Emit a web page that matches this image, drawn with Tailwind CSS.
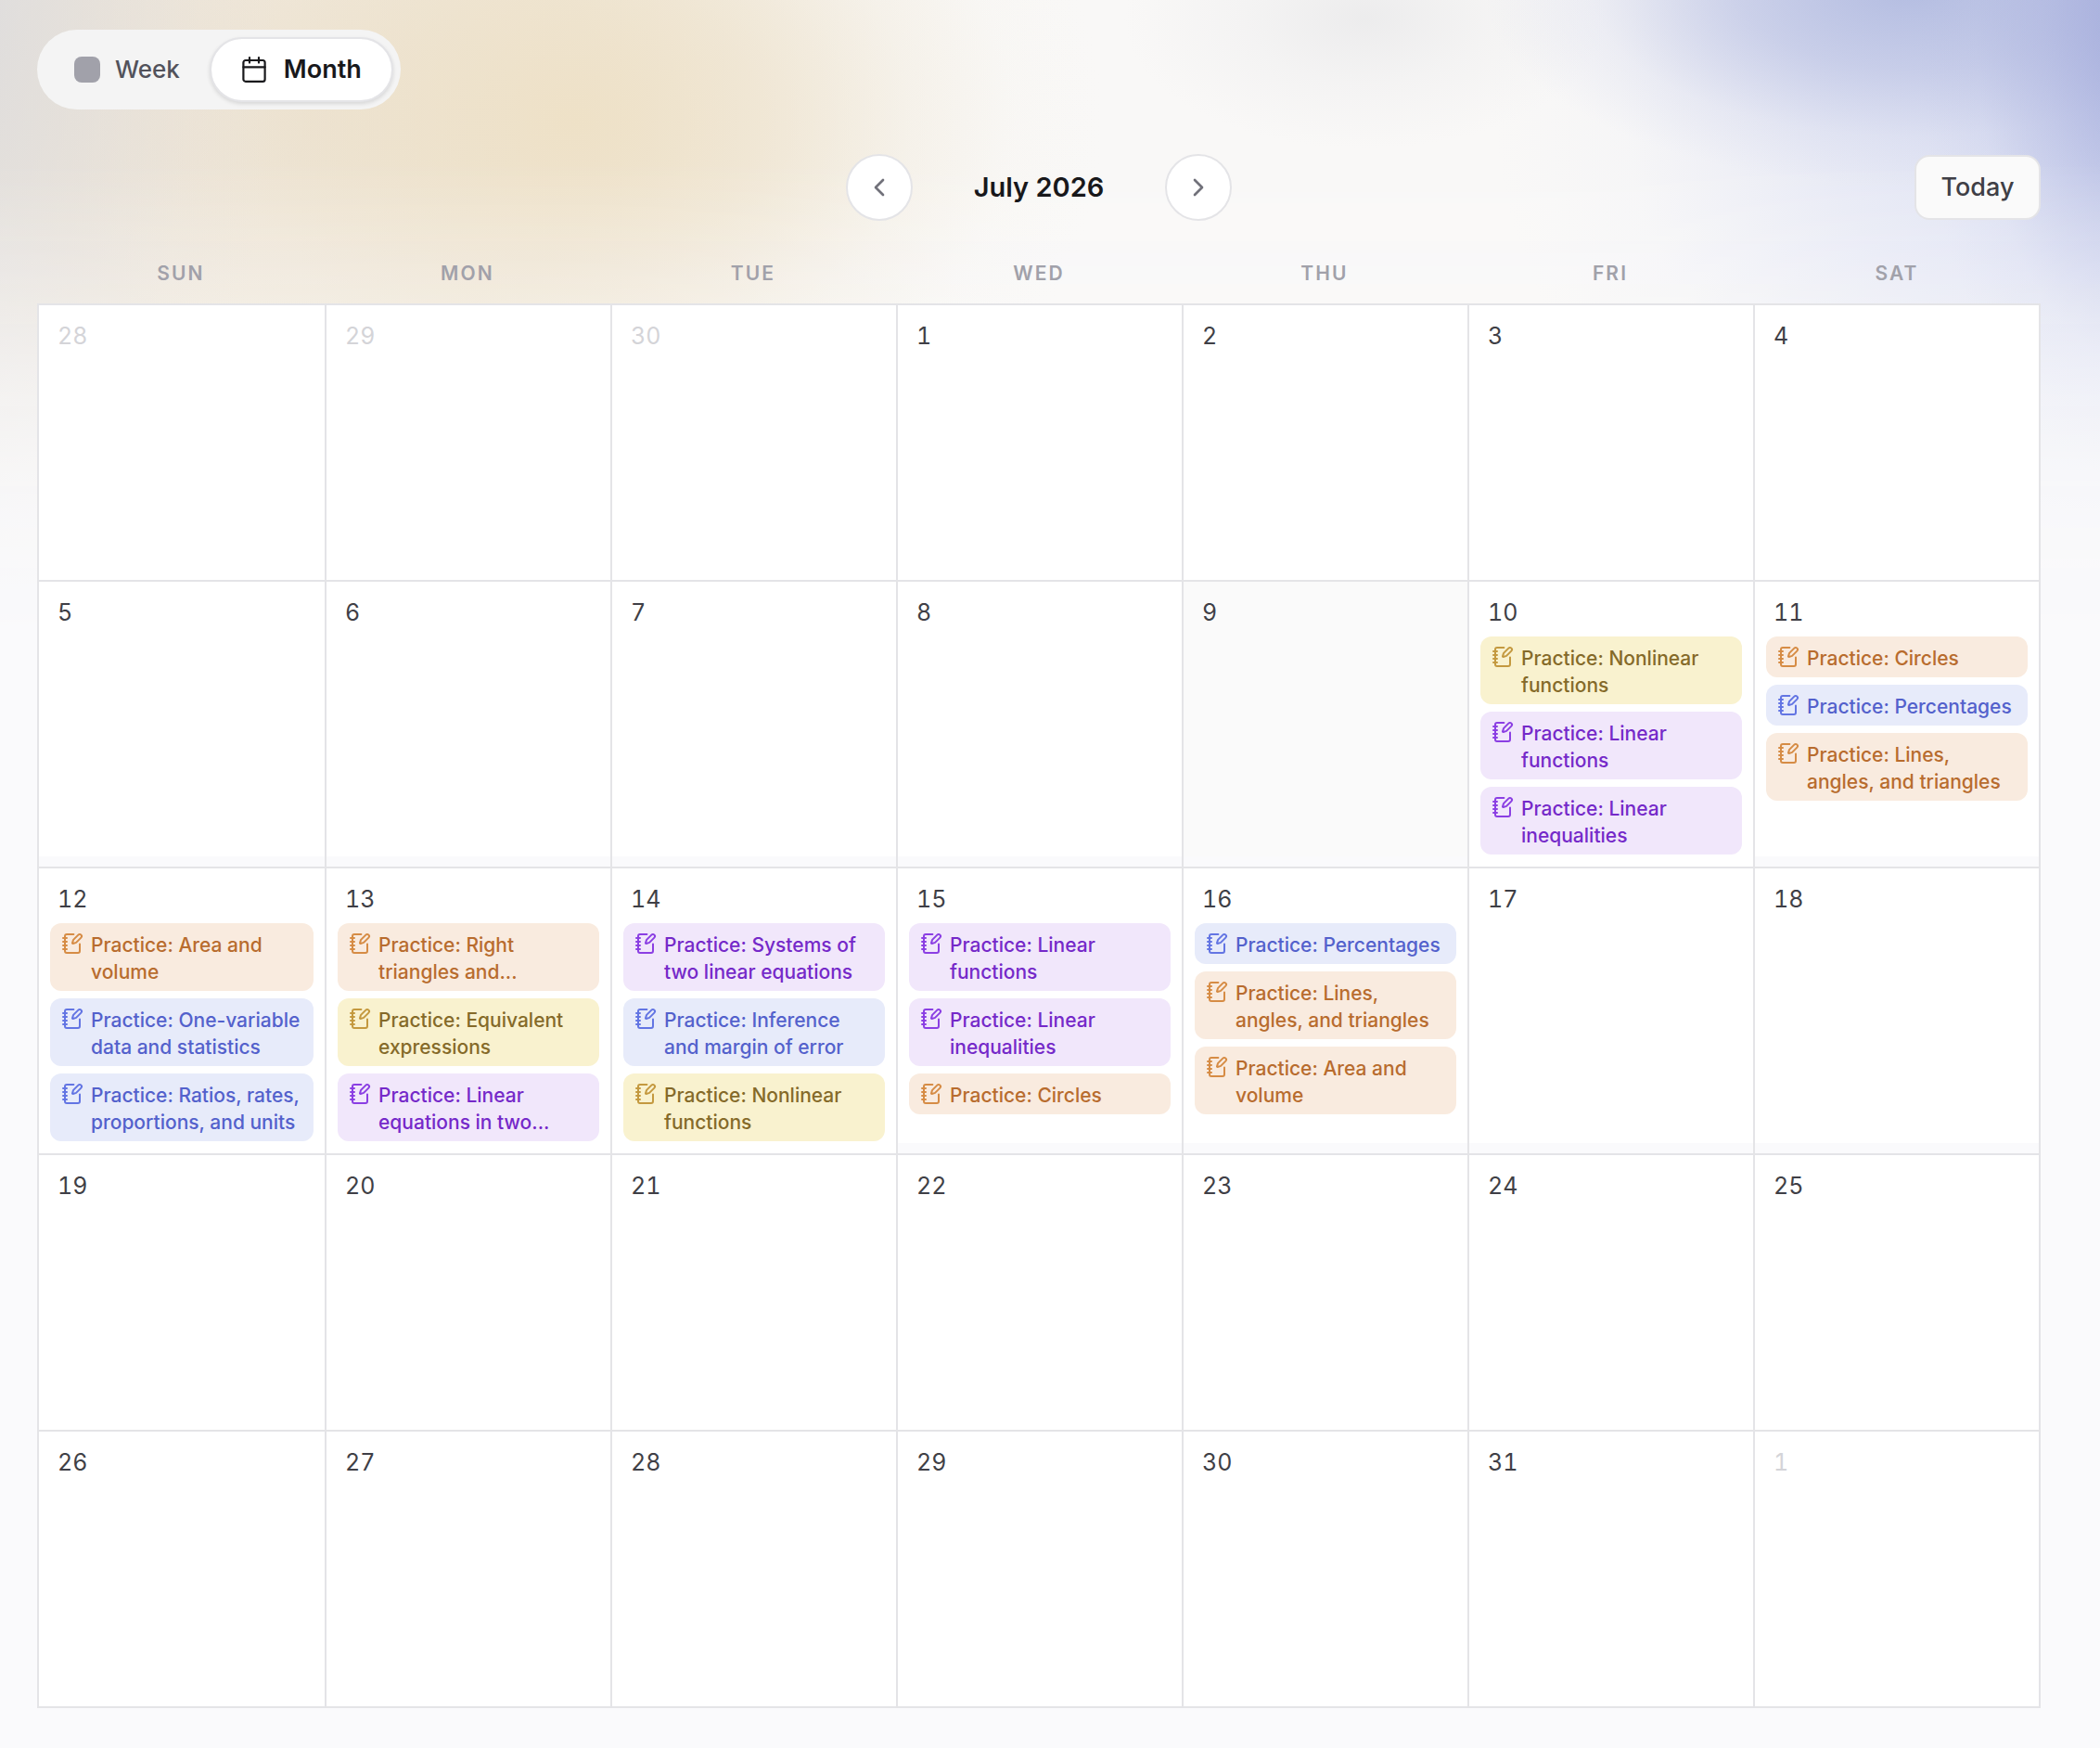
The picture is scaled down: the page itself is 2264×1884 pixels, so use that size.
<!DOCTYPE html>
<html lang="en">
<head>
<meta charset="utf-8">
<meta name="viewport" content="width=device-width, initial-scale=1">
<title>Study calendar</title>
<script src="https://cdn.jsdelivr.net/npm/@tailwindcss/browser@4"></script>
</head>
<body class="relative isolate min-h-screen bg-[#fafafc] font-['Inter',sans-serif] text-[#3f3f46]">

<!-- Soft colour wash behind the header -->
<div aria-hidden="true" class="absolute inset-x-0 top-0 -z-10 h-[700px] bg-[#f9f8f7] mask-b-from-25% mask-b-to-100% bg-[radial-gradient(ellipse_240px_500px_at_102%_20px,rgba(150,159,214,0.75),rgba(165,173,220,0.4)_45%,rgba(180,187,226,0.1)_75%,transparent),radial-gradient(ellipse_460px_210px_at_91%_-10px,rgba(172,182,222,0.85),rgba(180,188,225,0.6)_40%,rgba(195,201,231,0.2)_75%,transparent),radial-gradient(ellipse_700px_600px_at_102%_100px,rgba(208,214,241,0.85),rgba(215,220,243,0.5)_50%,rgba(225,229,246,0.12)_80%,transparent),radial-gradient(ellipse_260px_140px_at_65%_20px,rgba(228,228,230,0.6),rgba(232,232,234,0.3)_50%,transparent),radial-gradient(ellipse_360px_760px_at_-60px_0,rgba(218,218,221,0.9),rgba(222,220,221,0.45)_50%,rgba(226,223,223,0.15)_78%,transparent),radial-gradient(ellipse_560px_440px_at_620px_130px,rgba(238,224,196,0.85),rgba(238,226,202,0.6)_35%,rgba(241,233,216,0.25)_65%,rgba(245,241,231,0.08)_85%,transparent),radial-gradient(ellipse_860px_560px_at_330px_130px,rgba(234,223,206,0.95),rgba(237,227,210,0.8)_40%,rgba(241,234,221,0.4)_68%,rgba(245,241,231,0.12)_87%,transparent)]"></div>

<svg class="hidden" aria-hidden="true">
  <symbol id="notebook-pen" viewBox="0 0 24 24" fill="none" stroke="currentColor" stroke-width="2" stroke-linecap="round" stroke-linejoin="round">
    <path d="M13.4 2H6a2 2 0 0 0-2 2v16a2 2 0 0 0 2 2h12a2 2 0 0 0 2-2v-7.4"/>
    <path d="M2 6h4M2 10h4M2 14h4M2 18h4"/>
    <path d="M21.378 5.626a1 1 0 1 0-3.004-3.004l-5.01 5.012a2 2 0 0 0-.506.854l-.837 2.87a.5.5 0 0 0 .62.62l2.87-.837a2 2 0 0 0 .854-.506z"/>
  </symbol>
</svg>

<main class="pt-8 pr-16 pb-[45px] pl-10">
  <div class="inline-flex rounded-full bg-[#f4f4f4] p-2 align-top text-[27px] leading-8" role="group" aria-label="Calendar view">
    <button type="button" aria-pressed="false" class="flex h-[70px] items-center gap-4 rounded-full px-8 text-[26px] font-medium text-[#52525b]">
      <span class="size-7 rounded-lg bg-[#a1a1aa]"></span>Week
    </button>
    <button type="button" aria-pressed="true" class="flex h-[70px] items-center gap-[18px] rounded-full border-2 border-[#e4e4e7] bg-white bg-clip-padding px-8 font-semibold text-[#18181b] shadow-[0_2px_4px_rgba(0,0,0,0.12)]">
      <svg class="size-7" viewBox="0 0 28 28" fill="none" stroke="currentColor" stroke-width="2.2" stroke-linecap="round" stroke-linejoin="round" aria-hidden="true">
        <rect x="2.4" y="4" width="23.2" height="22.8" rx="2.4"/>
        <path d="M2.4 11.3h23.2M9 1.2v5.4M19 1.2v5.4"/>
      </svg>Month
    </button>
  </div>

  <div class="mt-12 grid grid-cols-[1fr_auto_1fr] items-center">
    <div class="col-start-2 flex items-center">
      <button type="button" aria-label="Previous month" class="flex size-18 items-center justify-center rounded-full border-2 border-[#e4e4e7] bg-white text-[#71717a]">
        <svg class="size-8" viewBox="0 0 24 24" fill="none" stroke="currentColor" stroke-width="2" stroke-linecap="round" stroke-linejoin="round"><path d="m15 18-6-6 6-6"/></svg>
      </button>
      <h1 class="w-[272px] text-center text-[29px] leading-10 font-semibold text-[#18181b]">July 2026</h1>
      <button type="button" aria-label="Next month" class="flex size-18 items-center justify-center rounded-full border-2 border-[#e4e4e7] bg-white text-[#71717a]">
        <svg class="size-8" viewBox="0 0 24 24" fill="none" stroke="currentColor" stroke-width="2" stroke-linecap="round" stroke-linejoin="round"><path d="m9 18 6-6-6-6"/></svg>
      </button>
    </div>
    <button type="button" class="h-[70px] w-[136px] justify-self-end rounded-2xl border-2 border-[#e4e4e7] bg-[#fafafa] text-[27px] leading-8 font-medium">Today</button>
  </div>

  <table class="mt-10 w-full table-fixed border-separate border-spacing-0">
    <colgroup><col class="w-[310px]"><col><col><col><col><col><col class="w-[310px]"></colgroup>
    <thead>
      <tr id="weekdays"></tr>
    </thead>
    <tbody id="weeks"></tbody>
  </table>
</main>

<script>
  const tones = {
    yellow: { chip: 'bg-[#f9f2cf] text-[#856a29]', icon: 'text-[#c4993f]' },
    purple: { chip: 'bg-[#f1e7fb] text-[#7529c9]', icon: 'text-[#8b3fe3]' },
    orange: { chip: 'bg-[#f9ebdf] text-[#b86c2e]', icon: 'text-[#d68c45]' },
    blue:   { chip: 'bg-[#e7ebfa] text-[#5361cc]', icon: 'text-[#6375e3]' },
  };

  const events = {
    10: [['yellow', 'Nonlinear functions'], ['purple', 'Linear functions'], ['purple', 'Linear inequalities']],
    11: [['orange', 'Circles'], ['blue', 'Percentages'], ['orange', 'Lines, angles, and triangles']],
    12: [['orange', 'Area and volume'], ['blue', 'One-variable data and statistics'], ['blue', 'Ratios, rates, proportions, and units']],
    13: [['orange', 'Right triangles and...'], ['yellow', 'Equivalent expressions'], ['purple', 'Linear equations in two...']],
    14: [['purple', 'Systems of two linear equations'], ['blue', 'Inference and margin of error'], ['yellow', 'Nonlinear functions']],
    15: [['purple', 'Linear functions'], ['purple', 'Linear inequalities'], ['orange', 'Circles']],
    16: [['blue', 'Percentages'], ['orange', 'Lines, angles, and triangles'], ['orange', 'Area and volume']],
  };

  const chip = ([tone, topic]) => `
    <li><button type="button" class="flex w-full items-start gap-2 rounded-xl pt-[9px] pr-2 pb-1.5 pl-3 text-left text-[21px] leading-[29px] font-medium ${tones[tone].chip}">
      <svg class="mt-px size-6 shrink-0 ${tones[tone].icon}" aria-hidden="true"><use href="#notebook-pen"/></svg>
      <span>Practice: ${topic}</span>
    </button></li>`;

  const cell = i => {
    const offset = i - 2;
    const inMonth = offset >= 1 && offset <= 31;
    const day = offset < 1 ? 30 + offset : offset > 31 ? offset - 31 : offset;
    const list = inMonth && events[day] ? events[day].map(chip).join('') : '';
    return `<td class="border-t-2 border-l-2 border-[#e4e4e7] bg-[#fafafc] p-0 align-top last:border-r-2">
      <div class="min-h-[296px] pt-[17px] ${list ? 'pb-[13px]' : ''} ${day === 9 ? 'bg-[#fafafa]' : 'bg-white'}">
        <div class="px-5 text-[25px] leading-8 tabular-nums ${inMonth ? '' : 'text-[#d4d4d8]'}">${day}</div>
        ${list ? `<ul class="mt-2.5 flex flex-col gap-2 px-3">${list}</ul>` : ''}
      </div></td>`;
  };

  document.getElementById('weekdays').innerHTML = ['Sun', 'Mon', 'Tue', 'Wed', 'Thu', 'Fri', 'Sat'].map(d =>
    `<th scope="col" class="h-[49px] p-0 align-top text-[21px] leading-[34px] font-semibold tracking-widest text-[#a1a1aa] uppercase">${d}</th>`).join('');

  document.getElementById('weeks').innerHTML = [0, 1, 2, 3, 4].map(w =>
    `<tr class="last:[&>td]:border-b-2">${[0, 1, 2, 3, 4, 5, 6].map(d => cell(w * 7 + d)).join('')}</tr>`).join('');
</script>
</body>
</html>
